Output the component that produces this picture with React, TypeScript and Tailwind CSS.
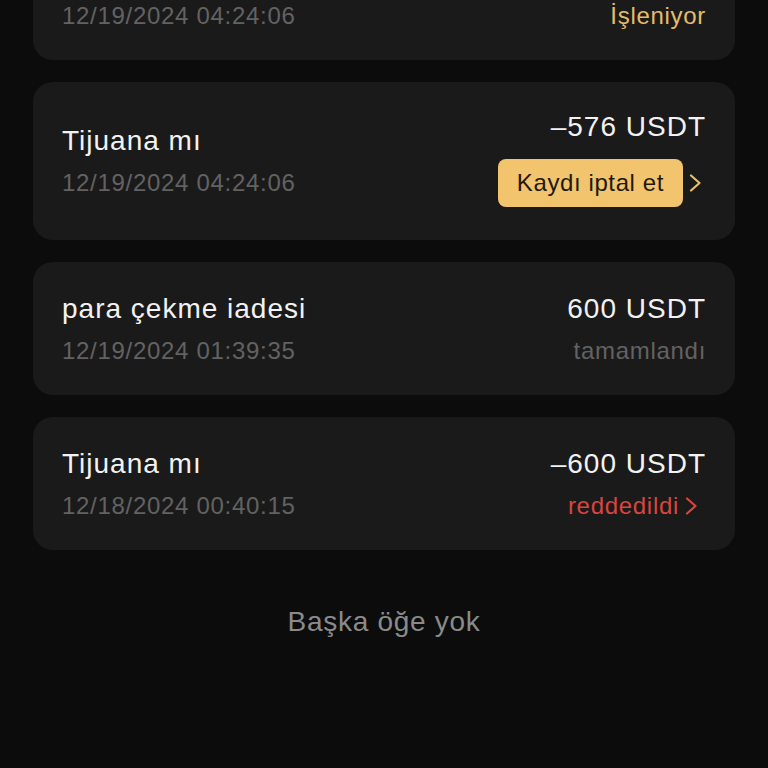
import React from "react";

function Chevron({ color }: { color: string }) {
  return (
    <svg width="14" height="18" viewBox="0 0 14 18" fill="none" className="shrink-0">
      <polyline points="3,1.5 11.5,9 3,16.5" stroke={color} strokeWidth="2.2" strokeLinecap="round" strokeLinejoin="round" />
    </svg>
  );
}

interface Row {
  title: string;
  date: string;
  amount: string;
  status: React.ReactNode;
}

function Card({ title, date, amount, status }: Row) {
  return (
    <div className="flex items-center justify-between rounded-[20px] bg-[#1a1a1a] px-[29px] pt-[30px] pb-[29px]">
      <div className="flex flex-col">
        <div className="text-[28px] leading-[34px] tracking-[1px] text-[#f2f2f2]">{title}</div>
        <div className="mt-[10px] text-[24px] leading-[30px] tracking-[0.7px] text-[#626262]">{date}</div>
      </div>
      <div className="flex flex-col items-end">
        <div className="text-[28px] leading-[34px] tracking-[1px] text-[#f2f2f2]">{amount}</div>
        <div className="mt-[10px] text-[24px] leading-[30px] tracking-[0.7px]">{status}</div>
      </div>
    </div>
  );
}

export default function App() {
  return (
    <div
      className="h-[768px] w-[768px] overflow-hidden bg-[#0c0c0c]"
      style={{ fontFamily: '"Liberation Sans", Arial, sans-serif' }}
    >
      <div className="mt-[-73px] flex flex-col gap-[22px] px-[33px]">
        <Card
          title="Tijuana mı"
          date="12/19/2024 04:24:06"
          amount="–576 USDT"
          status={<span className="text-[#e3bd69]">İşleniyor</span>}
        />

        <div className="flex items-center justify-between rounded-[20px] bg-[#1a1a1a] px-[29px] pt-[28px] pb-[33px]">
          <div className="mt-[4px] flex flex-col">
            <div className="text-[28px] leading-[34px] tracking-[1px] text-[#f2f2f2]">Tijuana mı</div>
            <div className="mt-[10px] text-[24px] leading-[30px] tracking-[0.7px] text-[#626262]">12/19/2024 04:24:06</div>
          </div>
          <div className="flex flex-col items-end">
            <div className="text-[28px] leading-[34px] tracking-[1px] text-[#f2f2f2]">–576 USDT</div>
            <div className="mt-[15px] flex items-center">
              <button className="flex h-[48px] items-center rounded-[8px] bg-[#f1c46d] px-[19px] text-[24px] tracking-[0.6px] text-[#1e1a12]">
                Kaydı iptal et
              </button>
              <span className="ml-[5px] mr-[4px] flex">
                <Chevron color="#e9c06a" />
              </span>
            </div>
          </div>
        </div>

        <Card
          title="para çekme iadesi"
          date="12/19/2024 01:39:35"
          amount="600 USDT"
          status={<span className="text-[#626262]">tamamlandı</span>}
        />

        <Card
          title="Tijuana mı"
          date="12/18/2024 00:40:15"
          amount="–600 USDT"
          status={
            <span className="flex items-center text-[#d9453f]">
              reddedildi
              <span className="ml-[5px] mr-[8px] flex">
                <Chevron color="#d9453f" />
              </span>
            </span>
          }
        />
      </div>

      <div className="mt-[55px] text-center text-[28px] leading-[34px] tracking-[0.7px] text-[#8a8a8a]">
        Başka öğe yok
      </div>
    </div>
  );
}
